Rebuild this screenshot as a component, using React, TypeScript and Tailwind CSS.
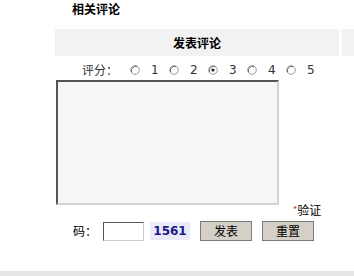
import React from "react";

const cjk = '"Noto Sans CJK SC", "DejaVu Sans", sans-serif';
const num = '"DejaVu Sans", "Noto Sans CJK SC", sans-serif';

function Radio({ checked }: { checked?: boolean }) {
  return (
    <svg width="10" height="10" viewBox="0 0 10 10" className="shrink-0">
      <circle cx="5" cy="5" r="4.3" fill="#fff" stroke="#9a9a9a" strokeWidth="1" />
      <path d="M1.6 7 A4.3 4.3 0 0 1 7 1.6" fill="none" stroke="#6a6a6a" strokeWidth="1" />
      {checked && <circle cx="5" cy="5" r="1.6" fill="#222" />}
    </svg>
  );
}

export default function App() {
  const opts = [1, 2, 3, 4, 5];
  return (
    <div
      className="w-[354px] h-[276px] bg-white flex flex-col overflow-hidden text-[#222]"
      style={{ fontFamily: cjk }}
    >
      <div className="h-[18px] pl-[72px] text-[12px] font-bold leading-[18px] text-black">相关评论</div>
      <div className="flex h-[27px] mt-[11px]">
        <div className="ml-[55px] w-[284px] bg-[#f2f2f2] flex items-center justify-center text-[12px] font-bold text-black">
          发表评论
        </div>
        <div className="ml-[3px] flex-1 bg-[#f2f2f2]" />
      </div>
      <div className="flex items-center h-[16px] mt-[6px] pl-[82px] text-[12px] text-[#333]">
        <span className="w-[48px] leading-[16px]">评分：</span>
        {opts.map((n) => (
          <div key={n} className="flex items-center w-[39px] shrink-0">
            <Radio checked={n === 3} />
            <span className="ml-[11px] text-[12px] leading-[16px]" style={{ fontFamily: num }}>
              {n}
            </span>
          </div>
        ))}
      </div>
      <div className="flex items-start mt-[2px]">
        <div className="ml-[56px] w-[223px] h-[125px] bg-[#f6f6f6] border-2 border-t-[#555] border-l-[#555] border-b-[#d4d4d4] border-r-[#d4d4d4]" />
        <span className="ml-[14px] mt-[123px] text-[12px] leading-[14px] text-black">
          <span className="text-[9px] text-[#e02020] align-top">*</span>验证
        </span>
      </div>
      <div className="flex items-center h-[20px] mt-[4px] pl-[73px] text-[12px] text-black">
        <span className="leading-[20px]">码：</span>
        <div className="ml-[6px] w-[41px] h-[19px] bg-white border border-t-[#555] border-l-[#555] border-b-[#ccc] border-r-[#ccc]" />
        <div
          className="ml-[6px] w-[40px] h-[18px] bg-[#eaeaf8] flex items-center justify-center text-[12px] font-bold text-[#1a1a8a]"
          style={{ fontFamily: num }}
        >
          1561
        </div>
        <div className="ml-[10px] w-[52px] h-[20px] bg-[#d4d0c8] border border-[#7a7a7a] flex items-center justify-center text-[12px]">
          发表
        </div>
        <div className="ml-[10px] w-[52px] h-[20px] bg-[#d4d0c8] border border-[#7a7a7a] flex items-center justify-center text-[12px]">
          重置
        </div>
      </div>
      <div className="mt-auto h-[5px] bg-[#e6e6e6]" />
    </div>
  );
}
